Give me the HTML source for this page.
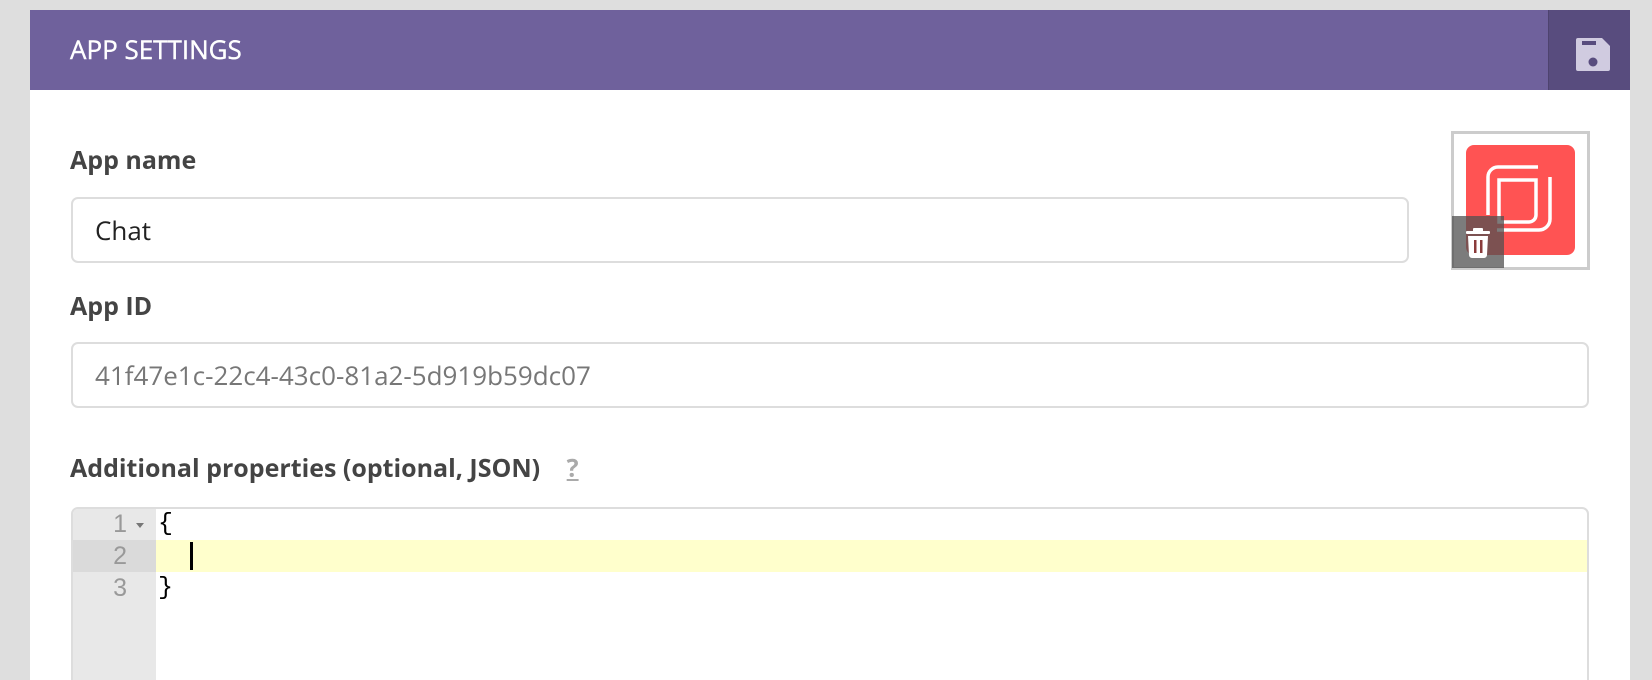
<!DOCTYPE html>
<html><head><meta charset="utf-8"><style>
*{margin:0;padding:0;box-sizing:border-box}
html,body{width:1652px;height:680px;overflow:hidden}
body{background:#dedede;font-family:"Open Sans","Liberation Sans","DejaVu Sans",sans-serif;position:relative}
.panel{position:absolute;left:30px;top:10px;width:1600px;height:680px;background:#fff}
.hdr{position:absolute;left:30px;top:10px;width:1600px;height:80px;background:#6f619c}
.hdr .t{position:absolute;left:40px;top:23px;color:#fff;font-size:26px;line-height:32px;-webkit-text-stroke:0.4px #fff}
.save{position:absolute;left:1518px;top:0;width:82px;height:80px;background:#584c7e;border-left:1px solid #4e436f}
.lbl{position:absolute;left:70px;color:#444;font-weight:bold;font-size:25px;line-height:30px}
.inp{position:absolute;left:71px;border:2px solid #ddd;border-radius:7px;background:#fff;font-size:26px;padding-left:22px}
.ed{position:absolute;left:71px;top:507px;width:1518px;height:200px;border:2px solid #ddd;border-radius:7px;overflow:hidden}
.gut{position:absolute;left:0;top:0;width:83px;height:100%;background:#e8e8e8}
.ln{position:absolute;width:100%;height:32px;font-family:"Liberation Mono",monospace;font-size:25px;line-height:32px}
.num{font-family:"Liberation Sans",sans-serif;color:#999;text-align:right;left:0;width:54px;font-size:25px}
</style></head><body>
<div class="panel"></div>
<div class="hdr"><div class="t">APP SETTINGS</div>
 <div class="save"><svg width="82" height="80" viewBox="0 0 82 80"><path d="M29 28 h24 l8 8 v23 a2 2 0 0 1 -2 2 h-30 a2 2 0 0 1 -2 -2 v-29 a2 2 0 0 1 2 -2z" fill="#d0cbe0"/><rect x="33" y="31" width="14" height="4" fill="#584c7e"/><circle cx="44" cy="52" r="4.5" fill="#584c7e"/></svg></div>
</div>
<div class="lbl" style="top:145px">App name</div>
<div class="inp" style="top:197px;width:1338px;height:66px;line-height:62px;color:#222">Chat</div>
<div class="lbl" style="top:291px">App ID</div>
<div class="inp" style="top:342px;width:1518px;height:66px;line-height:62px;color:#777">41f47e1c-22c4-43c0-81a2-5d919b59dc07</div>
<div class="lbl" style="top:453px">Additional properties (optional, JSON) <span style="color:#aaa;text-decoration:underline;margin-left:20px">?</span></div>
<div class="ed">
 <div class="gut"></div>
 <div class="ln" style="top:31px;background:#ffffcc"></div>
 <div class="ln" style="top:31px;width:83px;background:#dadada"></div>
 <div class="ln num" style="top:-1px">1</div>
 <div style="position:absolute;left:63px;top:14px;width:0;height:0;border-left:4px solid transparent;border-right:4px solid transparent;border-top:5px solid #777"></div>
 <div class="ln num" style="top:31px">2</div>
 <div class="ln num" style="top:63px">3</div>
 <div class="ln" style="top:-1px;left:85px;width:40px">{</div>
 <div class="ln" style="top:63px;left:85px;width:40px">}</div>
 <div style="position:absolute;left:117px;top:33px;width:3px;height:28px;background:#000"></div>
</div>
<div style="position:absolute;left:1451px;top:131px;width:139px;height:139px;border:3px solid #ccc;background:#fff">
 <div style="position:absolute;left:12px;top:11px;width:109px;height:110px;background:#ff5353;border-radius:8px">
  <svg width="109" height="110" viewBox="0 0 109 110" style="position:absolute;left:0;top:0"><path d="M33 35 H70 V70 A7 7 0 0 1 63 77 H33 Z" fill="none" stroke="#fff" stroke-width="3.5"/><path d="M22 70 V32 A10 10 0 0 1 32 22 H72" fill="none" stroke="#fff" stroke-width="3.5"/><path d="M84 32 V74 A11 11 0 0 1 73 85 H31" fill="none" stroke="#fff" stroke-width="3.5"/></svg>
 </div>
 <div style="position:absolute;left:-2px;top:82px;width:52px;height:52px;background:rgba(80,80,80,.75)">
  <svg width="52" height="52" viewBox="0 0 52 52"><rect x="14" y="15" width="24" height="3" rx="1" fill="#fff"/><rect x="21" y="12" width="10" height="4" rx="1" fill="#fff"/><path d="M16 20 h20 l-1 19 a3 3 0 0 1 -3 3 h-12 a3 3 0 0 1 -3 -3z" fill="#fff"/><rect x="22" y="24" width="2.5" height="13" fill="#8a3b3b"/><rect x="28" y="24" width="2.5" height="13" fill="#8a3b3b"/></svg>
 </div>
</div>
</body></html>
